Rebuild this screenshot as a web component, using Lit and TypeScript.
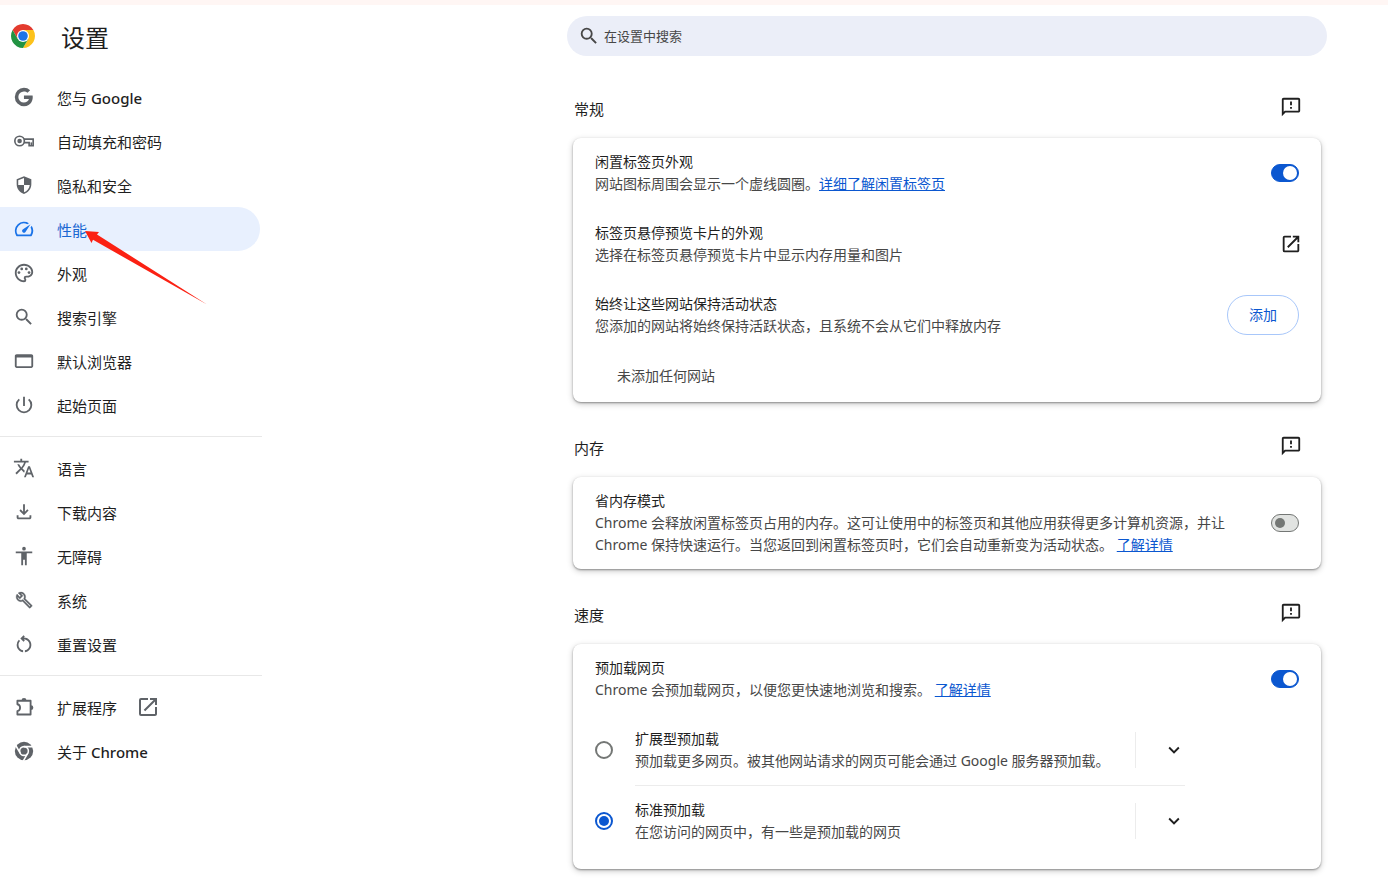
import { LitElement, html, css, svg, nothing } from "lit";
import { customElement, property } from "lit/decorators.js";
import { classMap } from "lit/directives/class-map.js";

const ICONS: Record<string, unknown> = {
  google: svg`<path transform="translate(-.6 0)" d="M12.545 10.239v3.821h5.445c-.712 2.315-2.647 3.972-5.445 3.972a6.033 6.033 0 1 1 0-12.064c1.498 0 2.866.549 3.921 1.453l2.814-2.814A9.969 9.969 0 0 0 12.545 2a10 10 0 1 0 0 20c8.396 0 10.249-7.85 9.426-11.748z"/>`,
  key: svg`<g fill="none" stroke="currentColor" stroke-width="1.8"><circle cx="7.2" cy="12" r="5.200"/><path d="M12 10h10v7.200h-4.400v-3.400h-5.700"/><path d="M20 17v-3.500"/></g><circle cx="7.2" cy="12" r="2.5"/>`,
  shield: svg`<path d="M12 2.4L4 5.6v5.6c0 4.9 3.4 9.3 8 10.5 4.6-1.2 8-5.6 8-10.5V5.6zM12 4.3v7.6h6.3c-.5 3.7-2.9 6.800-6.300 7.900v-7.900H5.700V6.800z"/>`,
  speed: svg`<path d="M20.38 8.57l-1.23 1.85a8 8 0 0 1-.22 7.58H5.07A8 8 0 0 1 15.58 6.85l1.85-1.23A10 10 0 0 0 3.35 19a2 2 0 0 0 1.72 1h13.85a2 2 0 0 0 1.74-1 10 10 0 0 0-.27-10.44zm-9.79 6.84a2 2 0 0 0 2.83 0l5.66-8.49-8.49 5.66a2 2 0 0 0 0 2.83z"/>`,
  palette: svg`<path d="M12 22C6.49 22 2 17.51 2 12S6.490 2 12 2s10 4.040 10 9c0 3.310-2.690 6-6 6h-1.770c-.28 0-.5.22-.5.5 0 .12.05.23.13.33.41.47.64 1.060.64 1.670A2.500 2.500 0 0 1 12 22zm0-18c-4.410 0-8 3.590-8 8s3.590 8 8 8c.28 0 .5-.22.5-.5a.54.54 0 0 0-.14-.35c-.41-.46-.63-1.050-.63-1.650a2.500 2.500 0 0 1 2.500-2.500H16c2.210 0 4-1.790 4-4 0-3.860-3.590-7-8-7z"/><circle cx="6.500" cy="11.500" r="1.500"/><circle cx="9.500" cy="7.500" r="1.500"/><circle cx="14.500" cy="7.500" r="1.500"/><circle cx="17.500" cy="11.500" r="1.500"/>`,
  search: svg`<path d="M15.500 14h-.79l-.28-.27A6.471 6.471 0 0 0 16 9.500 6.500 6.500 0 1 0 9.500 16c1.610 0 3.090-.59 4.230-1.570l.27.28v.79l5 4.990L20.490 19zm-6 0a4.500 4.500 0 1 1 0-9 4.500 4.500 0 0 1 0 9z"/>`,
  window: svg`<path d="M20 4.500H4c-1.100 0-2 .9-2 2v11c0 1.100.9 2 2 2h16c1.100 0 2-.9 2-2v-11c0-1.100-.9-2-2-2zm0 13.200H4V8.200h16z"/>`,
  power: svg`<path d="M13 3h-2v10h2zm4.830 2.170l-1.420 1.420A6.920 6.920 0 0 1 19 12a7 7 0 0 1-14 0c0-2.190 1.010-4.140 2.580-5.420L6.170 5.170A8.930 8.930 0 0 0 3 12a9 9 0 0 0 18 0 8.940 8.940 0 0 0-3.170-6.830z"/>`,
  translate: svg`<path d="M12.870 15.070l-2.540-2.510.03-.03A17.520 17.520 0 0 0 14.070 6H17V4h-7V2H8v2H1v1.990h11.170C11.500 7.920 10.440 9.750 9 11.350 8.070 10.320 7.300 9.190 6.690 8h-2c.73 1.630 1.730 3.170 2.980 4.560l-5.090 5.020L4 19l5-5 3.110 3.110zM18.500 10h-2L12 22h2l1.120-3h4.750L21 22h2zm-2.620 7l1.620-4.330L19.120 17z"/>`,
  download: svg`<path d="M12 15.500l-5-5 1.400-1.400 2.600 2.550V3.500h2v8.150l2.600-2.550 1.400 1.400zM6 20c-1.100 0-2-.9-2-2v-2.500h2V18h12v-2.500h2V18c0 1.100-.9 2-2 2z"/>`,
  person: svg`<path d="M12 2a2 2 0 1 1 0 4 2 2 0 0 1 0-4zm9 7h-6v13h-2v-6h-2v6H9V9H3V7h18z"/>`,
  wrench: svg`<g transform="translate(2.600 2.600) scale(.8)"><path d="M22.610 18.990l-9.080-9.080c.93-2.340.45-5.100-1.440-7C9.790.61 6.210.4 3.660 2.260L7.500 6.110 6.080 7.520 2.250 3.690C.39 6.230.6 9.820 2.900 12.110c1.860 1.860 4.570 2.350 6.890 1.480l9.110 9.110c.39.39 1.020.39 1.410 0l2.300-2.300c.4-.38.4-1.010 0-1.410zm-3 1.600l-9.460-9.460c-.61.45-1.290.72-2 .82-1.360.2-2.790-.21-3.830-1.250C3.370 9.760 2.930 8.500 3 7.260l3.090 3.090 4.240-4.240-3.090-3.090c1.240-.07 2.490.37 3.440 1.310 1.080 1.080 1.490 2.570 1.240 3.960-.12.71-.42 1.370-.88 1.960l9.450 9.450z" stroke="currentColor" stroke-width=".5"/></g>`,
  restart: svg`<path d="M6 13c0-1.650.67-3.150 1.760-4.240L6.340 7.340A8.014 8.014 0 0 0 4 13c0 4.080 3.050 7.440 7 7.930v-2.020c-2.830-.48-5-2.940-5-5.910zm14 0c0-4.420-3.580-8-8-8-.06 0-.12.01-.18.01l1.090-1.090L11.500 2.500 8 6l3.500 3.500 1.410-1.410-1.080-1.080c.06 0 .12-.01.17-.01 3.310 0 6 2.690 6 6 0 2.970-2.170 5.430-5 5.910v2.020c3.950-.49 7-3.850 7-7.930z"/>`,
  puzzle: svg`<path d="M4.800 5.200H19.200V20.200H4.800V16.400a3.800 3.800 0 0 0 0-7.400z" fill="none" stroke="currentColor" stroke-width="2" stroke-linejoin="round"/><path d="M9.300 4.900a2.700 2.700 0 0 1 5.400 0zM19.500 10a2.700 2.700 0 0 1 0 5.400z"/>`,
  chrome: svg`<circle cx="12" cy="12" r="10"/><g fill="none" stroke="#fff" stroke-width="1.700"><circle cx="12" cy="12" r="4.800"/><path d="M12 7.200h10M16.160 14.400l-5 8.660M7.840 14.400l-5-8.660"/></g>`,
  feedback: svg`<path d="M20 2H4c-1.100 0-1.990.9-1.990 2L2 22l4-4h14c1.100 0 2-.9 2-2V4c0-1.100-.9-2-2-2zm0 14H5.170L4 17.170V4h16zm-9-4h2v2h-2zm0-6h2v4h-2z"/>`,
  open: svg`<path d="M19 19H5V5h7V3H5a2 2 0 0 0-2 2v14a2 2 0 0 0 2 2h14c1.100 0 2-.9 2-2v-7h-2zM14 3v2h3.590l-9.830 9.830 1.410 1.410L19 6.410V10h2V3z"/>`,
  chevron: svg`<path d="M16.590 8.590L12 13.170 7.410 8.590 6 10l6 6 6-6z"/>`,
};

@customElement("cr-icon")
class CrIcon extends LitElement {
  @property() name = "";

  static styles = css`
    :host {
      display: block;
      flex: none;
      width: 22px;
      height: 22px;
    }
    svg {
      display: block;
      width: 100%;
      height: 100%;
      fill: currentColor;
      fill-rule: evenodd;
    }
  `;

  render() {
    return html`<svg viewBox="0 0 24 24" aria-hidden="true">${ICONS[this.name]}</svg>`;
  }
}

interface NavItem {
  icon: string;
  label: string;
  brand?: string;
  active?: boolean;
  external?: boolean;
}

const NAV: NavItem[][] = [
  [
    { icon: "google", label: "您与 ", brand: "Google" },
    { icon: "key", label: "自动填充和密码" },
    { icon: "shield", label: "隐私和安全" },
    { icon: "speed", label: "性能", active: true },
    { icon: "palette", label: "外观" },
    { icon: "search", label: "搜索引擎" },
    { icon: "window", label: "默认浏览器" },
    { icon: "power", label: "起始页面" },
  ],
  [
    { icon: "translate", label: "语言" },
    { icon: "download", label: "下载内容" },
    { icon: "person", label: "无障碍" },
    { icon: "wrench", label: "系统" },
    { icon: "restart", label: "重置设置" },
  ],
  [
    { icon: "puzzle", label: "扩展程序", external: true },
    { icon: "chrome", label: "关于 ", brand: "Chrome" },
  ],
];

const PRELOAD = [
  {
    id: "extended",
    title: "扩展型预加载",
    detail: "预加载更多网页。被其他网站请求的网页可能会通过 Google 服务器预加载。",
    checked: false,
  },
  {
    id: "standard",
    title: "标准预加载",
    detail: "在您访问的网页中，有一些是预加载的网页",
    checked: true,
  },
];

@customElement("app-root")
class AppRoot extends LitElement {
  static styles = css`
    :host {
      display: block;
      min-height: 100vh;
      box-sizing: border-box;
      border-top: 5px solid #fff6f4;
      background: #fff;
      color: #1f1f1f;
      font-family: "Noto Sans", "Noto Sans CJK SC", sans-serif;
      font-size: 14px;
      line-height: 22px;
    }
    * {
      box-sizing: border-box;
    }
    h1,
    h2,
    h3,
    p {
      margin: 0;
      font-size: 14px;
      font-weight: 400;
    }
    button,
    input {
      font: inherit;
      margin: 0;
    }
    .page {
      display: grid;
      grid-template-columns: 262px minmax(0, 760px);
      justify-content: space-between;
      padding-right: 61px;
    }

    .brand {
      display: flex;
      align-items: center;
      gap: 26px;
      height: 70px;
      padding: 0 0 8px 11px;
    }
    .logo {
      width: 24px;
      height: 24px;
    }
    .brand h1 {
      padding-top: 3px;
      font-size: 24px;
      line-height: 32px;
    }
    .group + .group {
      margin-top: 9px;
      padding-top: 9px;
      border-top: 1px solid #e8e8e8;
    }
    .item {
      position: relative;
      display: flex;
      align-items: center;
      gap: 22px;
      height: 44px;
      margin-right: 2px;
      padding-left: 13px;
      border-radius: 0 22px 22px 0;
      color: #1f1f1f;
      font-size: 15px;
      text-decoration: none;
    }
    .item cr-icon {
      color: #5f6368;
    }
    .label {
      padding-top: 1px;
    }
    .latin {
      font-weight: 500;
    }
    .active {
      background: #e8f0fe;
      color: #1967d2;
    }
    .active cr-icon {
      color: #1a73e8;
    }
    .item .external {
      width: 24px;
      height: 24px;
      margin-left: -3px;
    }
    .pointer {
      position: absolute;
      left: 85px;
      top: 23px;
      width: 124px;
      height: 76px;
      z-index: 1;
      pointer-events: none;
    }

    .search {
      display: flex;
      align-items: center;
      gap: 4px;
      height: 40px;
      margin: 11px 0 7px;
      padding: 0 20px 0 11px;
      border-radius: 20px;
      background: #ebeef8;
      color: #474747;
    }
    .search input {
      flex: 1;
      min-width: 0;
      padding: 0;
      border: 0;
      outline: 0;
      background: none;
      color: inherit;
      font-size: 13px;
    }
    .search input::placeholder {
      color: #474747;
      opacity: 1;
    }
    section {
      padding: 0 6px;
    }
    .head {
      display: flex;
      align-items: center;
      justify-content: space-between;
      padding: 30px 19px 18px 1px;
    }
    .head h2 {
      padding-top: 5px;
      font-size: 15px;
    }
    .icon-button {
      display: block;
      flex: none;
      padding: 0;
      border: 0;
      background: none;
      color: #1f1f1f;
      cursor: pointer;
    }
    .card {
      border-radius: 8px;
      background: #fff;
      box-shadow:
        0 1px 2px rgba(0, 0, 0, 0.35),
        0 2px 6px rgba(0, 0, 0, 0.22);
    }
    .row {
      display: flex;
      align-items: center;
      justify-content: space-between;
      gap: 22px;
      padding: 13px 22px;
    }
    .row + .row {
      margin-top: 1px;
    }
    .text {
      flex: 1;
      min-width: 0;
      display: block;
    }
    .title,
    .detail {
      display: block;
    }
    .detail {
      color: #474747;
    }
    .detail a {
      color: #0b57d0;
    }
    .row > .icon-button {
      margin-right: -3px;
    }
    .empty {
      padding: 15px 44px;
      color: #474747;
    }
    .add {
      height: 40px;
      padding: 0 21px;
      border: 1px solid #a8c7fa;
      border-radius: 20px;
      background: #fff;
      color: #0b57d0;
    }
    .switch {
      appearance: none;
      display: flex;
      align-items: center;
      flex: none;
      width: 28px;
      height: 18px;
      padding: 0 3px;
      border: 1px solid #747775;
      border-radius: 9px;
      background: #e1e3e1;
    }
    .switch::before {
      content: "";
      width: 10px;
      height: 10px;
      border-radius: 50%;
      background: #747775;
    }
    .switch:checked {
      justify-content: flex-end;
      padding: 0 1px;
      border-color: #0b57d0;
      background: #0b57d0;
    }
    .switch:checked::before {
      width: 14px;
      height: 14px;
      background: #fff;
    }

    .options {
      padding: 1px 136px 13px 22px;
    }
    .option {
      display: flex;
      align-items: center;
      gap: 22px;
    }
    .option-body {
      flex: 1;
      min-width: 0;
      display: flex;
      align-items: center;
      padding: 13px 0;
    }
    .option + .option .option-body {
      border-top: 1px solid #ececec;
    }
    .expand {
      display: flex;
      align-items: center;
      height: 36px;
      padding-left: 27px;
      border-left: 1px solid #ececec;
    }
    .radio {
      appearance: none;
      display: grid;
      place-items: center;
      flex: none;
      width: 18px;
      height: 18px;
      border: 2px solid #747775;
      border-radius: 50%;
    }
    .radio:checked {
      border-color: #0b57d0;
    }
    .radio:checked::before {
      content: "";
      width: 10px;
      height: 10px;
      border-radius: 50%;
      background: #0b57d0;
    }
  `;

  private navItem(item: NavItem) {
    return html`<a
      class=${classMap({ item: true, active: !!item.active })}
      href="#"
      aria-current=${item.active ? "page" : nothing}
    >
      <cr-icon name=${item.icon}></cr-icon>
      <span class="label"
        >${item.label}${item.brand ? html`<span class="latin">${item.brand}</span>` : nothing}</span
      >
      ${item.external ? html`<cr-icon class="external" name="open"></cr-icon>` : nothing}
      ${item.active
        ? html`<svg class="pointer" viewBox="0 0 124 76" aria-hidden="true">
            <path fill="#fb2113" d="M0 1L14 2L12 4.500L122 74.500L8 9.800L6.500 13Z" />
          </svg>`
        : nothing}
    </a>`;
  }

  private head(title: string) {
    return html`<div class="head">
      <h2>${title}</h2>
      <button class="icon-button" aria-label="发送反馈"><cr-icon name="feedback"></cr-icon></button>
    </div>`;
  }

  render() {
    return html`<div class="page">
      <aside>
        <div class="brand">
          <svg class="logo" viewBox="0 0 24 24" aria-hidden="true">
            <path fill="#e33b2e" d="M1.610 6A12 12 0 0 1 22.390 6H12L6.800 15z" />
            <path fill="#fcc21b" d="M22.390 6A12 12 0 0 1 12 24L17.200 15L12 6z" />
            <path fill="#229342" d="M12 24A12 12 0 0 1 1.610 6L6.800 15H17.200z" />
            <circle cx="12" cy="12" r="6" fill="#fff" />
            <circle cx="12" cy="12" r="4.800" fill="#1a73e8" />
          </svg>
          <h1>设置</h1>
        </div>
        <nav>
          ${NAV.map((group) => html`<div class="group">${group.map((i) => this.navItem(i))}</div>`)}
        </nav>
      </aside>
      <main>
        <label class="search">
          <cr-icon name="search"></cr-icon>
          <input type="text" placeholder="在设置中搜索" aria-label="在设置中搜索" />
        </label>

        <section>
          ${this.head("常规")}
          <div class="card">
            <div class="row">
              <div class="text">
                <label class="title" for="idle">闲置标签页外观</label>
                <p class="detail">网站图标周围会显示一个虚线圆圈。<a href="#">详细了解闲置标签页</a></p>
              </div>
              <input class="switch" id="idle" type="checkbox" role="switch" checked />
            </div>
            <div class="row">
              <div class="text">
                <h3 class="title">标签页悬停预览卡片的外观</h3>
                <p class="detail">选择在标签页悬停预览卡片中显示内存用量和图片</p>
              </div>
              <button class="icon-button" aria-label="标签页悬停预览卡片的外观">
                <cr-icon name="open"></cr-icon>
              </button>
            </div>
            <div class="row">
              <div class="text">
                <h3 class="title">始终让这些网站保持活动状态</h3>
                <p class="detail">您添加的网站将始终保持活跃状态，且系统不会从它们中释放内存</p>
              </div>
              <button class="add">添加</button>
            </div>
            <p class="empty">未添加任何网站</p>
          </div>
        </section>

        <section>
          ${this.head("内存")}
          <div class="card">
            <div class="row">
              <div class="text">
                <label class="title" for="saver">省内存模式</label>
                <p class="detail">
                  Chrome 会释放闲置标签页占用的内存。这可让使用中的标签页和其他应用获得更多计算机资源，并让
                  Chrome 保持快速运行。当您返回到闲置标签页时，它们会自动重新变为活动状态。
                  <a href="#">了解详情</a>
                </p>
              </div>
              <input class="switch" id="saver" type="checkbox" role="switch" />
            </div>
          </div>
        </section>

        <section>
          ${this.head("速度")}
          <div class="card">
            <div class="row">
              <div class="text">
                <label class="title" for="preload">预加载网页</label>
                <p class="detail">
                  Chrome 会预加载网页，以便您更快速地浏览和搜索。 <a href="#">了解详情</a>
                </p>
              </div>
              <input class="switch" id="preload" type="checkbox" role="switch" checked />
            </div>
            <div class="options">
              ${PRELOAD.map(
                (o) => html`<div class="option">
                  <input class="radio" type="radio" name="mode" id=${o.id} ?checked=${o.checked} />
                  <div class="option-body">
                    <label class="text" for=${o.id}>
                      <span class="title">${o.title}</span>
                      <span class="detail">${o.detail}</span>
                    </label>
                    <button class="icon-button expand" aria-label="展开">
                      <cr-icon name="chevron"></cr-icon>
                    </button>
                  </div>
                </div>`,
              )}
            </div>
          </div>
        </section>
      </main>
    </div>`;
  }
}
